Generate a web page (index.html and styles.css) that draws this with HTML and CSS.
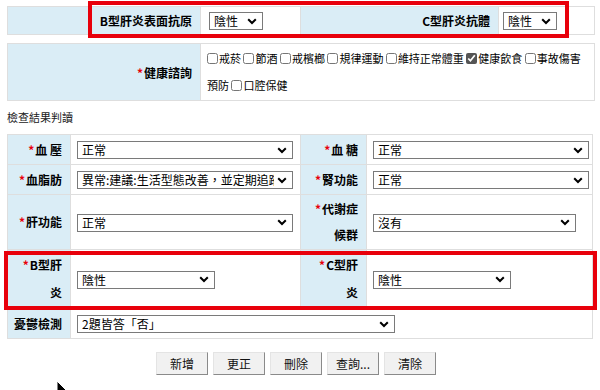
FILE: index.html
```html
<!DOCTYPE html>
<html lang="zh-Hant">
<head>
  <meta charset="UTF-8" />
  <meta name="viewport" content="width=device-width, initial-scale=1.0" />
  <title>檢查結果判讀</title>
  <link rel="stylesheet" href="styles.css">
</head>
<body>
  <div class="page">
    <table class="form top-form">
      <colgroup>
        <col class="w193"><col class="w100"><col class="w198"><col>
      </colgroup>
      <tr class="row-hep">
        <th>B型肝炎表面抗原</th>
        <td><select class="sel-xs"><option>陰性</option></select></td>
        <th>C型肝炎抗體</th>
        <td class="val-tight"><select class="sel-xs"><option>陰性</option></select></td>
      </tr>
    </table>

    <table class="form health-form">
      <colgroup>
        <col class="w193"><col>
      </colgroup>
      <tr>
        <th><span class="req">*</span>健康諮詢</th>
        <td class="checks">
          <label><input type="checkbox">戒菸</label>
          <label><input type="checkbox">節酒</label>
          <label><input type="checkbox">戒檳榔</label>
          <label><input type="checkbox">規律運動</label>
          <label><input type="checkbox">維持正常體重</label>
          <label><input type="checkbox" checked>健康飲食</label>
          <label><input type="checkbox">事故傷害預防</label>
          <label><input type="checkbox">口腔保健</label>
        </td>
      </tr>
    </table>

    <div class="section-title">檢查結果判讀</div>

    <table class="form result-form">
      <colgroup>
        <col class="w63"><col class="w230"><col class="w66"><col>
      </colgroup>
      <tr>
        <th><span class="req">*</span>血&nbsp;壓</th>
        <td><select class="sel-lg"><option>正常</option></select></td>
        <th class="lbl-2"><span class="req">*</span>血&nbsp;糖</th>
        <td><select class="sel-lg"><option>正常</option></select></td>
      </tr>
      <tr>
        <th><span class="req">*</span>血脂肪</th>
        <td><select class="sel-lg"><option>異常:建議:生活型態改善，並定期追蹤</option></select></td>
        <th class="lbl-2"><span class="req">*</span>腎功能</th>
        <td><select class="sel-lg"><option>正常</option></select></td>
      </tr>
      <tr>
        <th><span class="req">*</span>肝功能</th>
        <td><select class="sel-lg"><option>正常</option></select></td>
        <th class="lbl-2"><span class="req">*</span>代謝症候群</th>
        <td><select class="sel-md"><option>沒有</option></select></td>
      </tr>
      <tr class="row-tall">
        <th><span class="req">*</span>B型肝炎</th>
        <td><select class="sel-sm"><option>陰性</option></select></td>
        <th class="lbl-2"><span class="req">*</span>C型肝炎</th>
        <td><select class="sel-sm"><option>陰性</option></select></td>
      </tr>
      <tr>
        <th>憂鬱檢測</th>
        <td colspan="3"><select class="sel-xl"><option>2題皆答「否」</option></select></td>
      </tr>
    </table>

    <div class="actions">
      <button>新增</button>
      <button>更正</button>
      <button>刪除</button>
      <button>查詢...</button>
      <button>清除</button>
    </div>
  </div>

  <!-- annotation boxes from the screenshot -->
  <div class="mark mark-top"></div>
  <div class="mark mark-hep"></div>

  <svg class="cursor" width="14" height="20" viewBox="0 0 14 20">
    <path d="M1 1 L1 16 L4.5 12.5 L7 18 L9 17 L6.5 11.5 L11.5 11.5 Z" fill="#000" stroke="#fff" stroke-width="1"/>
  </svg>
</body>
</html>
```

FILE: styles.css
```css
body {
  margin: 0;
  font-family: "Noto Sans CJK TC", "Liberation Sans", sans-serif;
  font-size: 12px;
  color: #000;
  background-color: #fff;
}
.page {
  padding: 6px 5px 0 7px;
}
.form {
  border-collapse: collapse;
  table-layout: fixed;
  width: 588px;
}
.form th,
.form td {
  border: 1px solid #dedede;
  padding: 0 6px;
  vertical-align: middle;
}
.form th {
  background-color: #daedf6;
  text-align: right;
  font-weight: bold;
  padding: 0 8px 0 3px;
  line-height: 26px;
}
.req {
  color: #e8000b;
  font-weight: bold;
  margin-right: 1px;
}
.w193 { width: 193px; }
.w100 { width: 100px; }
.w198 { width: 198px; }
.w63 { width: 63px; }
.w230 { width: 230px; }
.w66 { width: 66px; }

.top-form th,
.top-form td {
  height: 27px;
}
.top-form td {
  padding: 0 8px;
}
.top-form .val-tight {
  padding: 0 4px;
}

.health-form {
  margin-top: 8px;
}
.health-form th,
.health-form td {
  line-height: 27px;
  padding-top: 1px;
  padding-bottom: 1px;
}
.checks {
  font-size: 11px;
  padding: 1px 2px 1px 7px;
}
.checks input {
  width: 11px;
  height: 11px;
  margin: 0 1px 0 0;
  vertical-align: -1px;
  accent-color: #555;
}

.section-title {
  font-size: 11px;
  color: #222;
  line-height: 20px;
  padding-top: 6px;
  margin-bottom: 7px;
}

.result-form {
  width: 586px;
}
.result-form th,
.result-form td {
  height: 27px;
  padding-top: 1px;
  padding-bottom: 1px;
}
.result-form .lbl-2 {
  padding-left: 8px;
}
.result-form .row-tall th {
  line-height: 28px;
}

select {
  appearance: none;
  -webkit-appearance: none;
  font-family: "Noto Sans CJK TC", sans-serif;
  font-size: 12px;
  color: #000;
  height: 18px;
  line-height: 16px;
  padding: 0 18px 0 4px;
  border: 1px solid #7a7a7a;
  border-radius: 0;
  background: #fff url("data:image/svg+xml,%3Csvg xmlns='http://www.w3.org/2000/svg' width='10' height='7' viewBox='0 0 10 7'%3E%3Cpath d='M1.2 1.2 L5 5 L8.8 1.2' fill='none' stroke='%23000' stroke-width='2'/%3E%3C/svg%3E") no-repeat right 5px center;
  background-size: 10px 7px;
  vertical-align: middle;
  overflow: hidden;
  white-space: nowrap;
}
.sel-xs { width: 54px; }
.sel-sm { width: 138px; }
.sel-md { width: 203px; }
.sel-lg { width: 216px; }
.sel-xl { width: 318px; }

.actions {
  display: flex;
  justify-content: center;
  gap: 5px;
  margin-top: 13px;
  padding-right: 10px;
}
.actions button {
  font-family: "Noto Sans CJK TC", sans-serif;
  font-size: 12px;
  width: 52px;
  height: 23px;
  padding: 0;
  background-color: #f1f1f1;
  border: 1px solid;
  border-color: #e4e4e4 #8a8a8a #8a8a8a #e4e4e4;
  border-radius: 0;
  color: #111;
  cursor: pointer;
}
.actions button:hover {
  background-color: #e6e6e6;
}

.mark {
  position: absolute;
  border: 4px solid #e8000b;
  box-sizing: border-box;
  pointer-events: none;
}
.mark-top {
  left: 88px;
  top: 1px;
  width: 481px;
  height: 37px;
}
.mark-hep {
  left: 4px;
  top: 251px;
  width: 593px;
  height: 59px;
}
.cursor {
  position: absolute;
  left: 56px;
  top: 380px;
}
```
